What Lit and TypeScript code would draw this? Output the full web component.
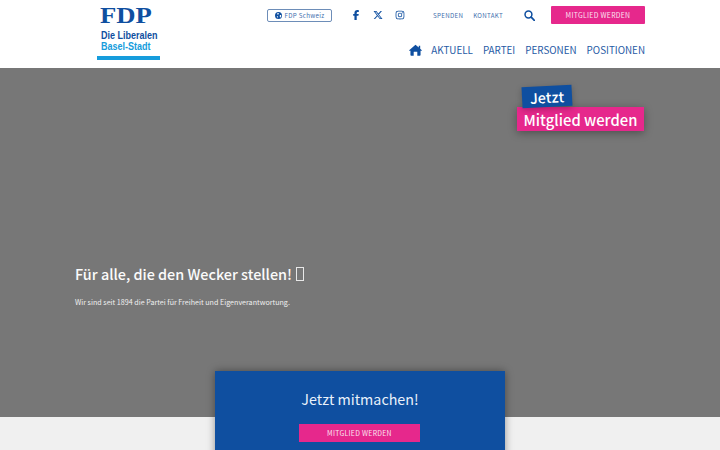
import { LitElement, html, css } from "lit";
import { customElement } from "lit/decorators.js";

@customElement("app-root")
export class AppRoot extends LitElement {
  static styles = css`
    :host { display: block; width: 720px; height: 450px; overflow: hidden; background: #f0f0f0; font-family: "Noto Sans CJK SC", "Noto Sans", sans-serif; color: #0f4fa0; }
    * { box-sizing: border-box; }
    a { text-decoration: none; color: inherit; }
    header { height: 68px; background: #fff; display: flex; justify-content: space-between; padding: 0 75px 0 97px; }
    .logo { width: 63px; height: 60px; display: flex; flex-direction: column; border-bottom: 4px solid #169cdc; }
    .logo .fdp { font-family: "Liberation Serif", serif; font-weight: 700; font-size: 23px; line-height: 18px; margin: 7px 0 0 3px; color: #0f4fa0; transform: scaleX(1.16); transform-origin: left center; }
    .logo .l { font-family: "Liberation Sans", sans-serif; font-weight: 700; font-size: 10.6px; line-height: 11px; margin-left: 4px; white-space: nowrap; transform: scaleX(0.85); transform-origin: left center; }
    .logo .l1 { margin-top: 5px; color: #0f4fa0; }
    .logo .l2 { color: #169cdc; }
    .right { display: flex; flex-direction: column; align-items: flex-end; }
    .top { height: 18px; margin-top: 6px; display: flex; align-items: center; }
    .swiss { width: 65px; height: 13px; border: 1px solid #6d8db8; border-radius: 2px; display: flex; align-items: center; justify-content: center; gap: 3px; font-size: 6.2px; letter-spacing: 0.3px; color: #3f6fae; }
    .swiss svg { width: 7px; height: 7px; fill: #0f4fa0; }
    .social { display: flex; align-items: center; gap: 12px; margin-left: 19px; }
    .social svg { display: block; height: 10px; width: 10px; fill: #0f4fa0; }
    .meta { display: flex; gap: 10px; margin-left: 28px; font-size: 6.2px; letter-spacing: 0.3px; color: #3f6fae; }
    .search { margin-left: 21px; width: 11px; height: 11px; display: block; }
    .btn { background: #e6288c; color: #fbe3f0; font-size: 6.85px; letter-spacing: 0.3px; display: flex; align-items: center; justify-content: center; }
    .btn.top-b { width: 94px; height: 18px; margin-left: 16px; border-radius: 1px; }
    nav { margin-top: 18px; display: flex; align-items: center; gap: 10px; font-size: 9.85px; line-height: 16px; color: #1f5aa5; }
    nav svg { width: 13px; height: 12px; fill: #0f4fa0; display: block; margin-right: -1px; }
    .hero { position: relative; height: 349px; background: #777; padding: 196px 0 0 75px; color: #fff; }
    h1 { margin: 0; font-size: 14.4px; line-height: 20px; font-weight: 500; color: #fbfbfb; display: flex; align-items: center; gap: 4px; }
    .tofu { width: 8px; height: 14px; border: 1px solid #e8e8e8; display: block; }
    .hero p { margin: 12px 0 0; font-size: 7.15px; line-height: 12px; color: #f0f0f0; }
    .badge { position: absolute; left: 517px; top: 18px; display: flex; flex-direction: column; align-items: flex-start; }
    .b1 { margin-left: 5px; width: 50px; height: 21px; background: #0f4fa0; color: #fff; font-size: 14.3px; font-weight: 500; display: flex; align-items: center; justify-content: center; transform: rotate(-3deg); box-shadow: 0 2px 6px rgba(0,0,0,.25); }
    .b2 { width: 127px; height: 24px; background: #e6288c; color: #fff; font-size: 14.8px; font-weight: 500; display: flex; align-items: center; justify-content: center; box-shadow: 0 2px 8px rgba(0,0,0,.35); }
    .card { position: relative; width: 290px; height: 140px; margin: -46px 0 0 215px; background: #0f4fa0; box-shadow: 0 0 8px rgba(0,0,0,.4); display: flex; flex-direction: column; align-items: center; padding-top: 16px; }
    .card h2 { margin: 0; font-size: 14.3px; line-height: 24px; font-weight: 400; color: #e9f1fb; }
    .card .btn { width: 121px; height: 18px; margin: 13px 1px 0 0; }
  `;

  render() {
    return html`
      <header>
        <a class="logo" href="#">
          <span class="fdp">FDP</span>
          <span class="l l1">Die Liberalen</span>
          <span class="l l2">Basel-Stadt</span>
        </a>
        <div class="right">
          <div class="top">
            <a class="swiss" href="#">
              <svg viewBox="0 0 16 16"><path fill-rule="evenodd" d="M8 0a8 8 0 1 0 0 16A8 8 0 0 0 8 0ZM5 3l3-1 1 2-2 2-2-1ZM11 7l3 0 0 3-2 3-1-2ZM4 9l3 1 0 3-2-1Z"/></svg>
              FDP Schweiz
            </a>
            <div class="social">
              <svg viewBox="0 0 320 512"><path d="M80 299v213h116V299h87l18-97H196v-34c0-51 20-71 72-71 16 0 29 0 37 1V10c-14-4-49-8-69-8C130 2 80 52 80 159v43H15v97Z"/></svg>
              <svg viewBox="0 0 512 512"><path d="M389 48h71L306 224l181 240H345L234 319 107 464H36l165-188L27 48h146l100 133Zm-25 374h39L151 88h-42Z"/></svg>
              <svg viewBox="0 0 448 512"><path d="M224 141a115 115 0 1 0 0 230 115 115 0 0 0 0-230Zm0 190a75 75 0 1 1 0-150 75 75 0 0 1 0 150Zm146-194a27 27 0 1 1-54 0 27 27 0 0 1 54 0Zm76 27c-2-36-10-68-36-94s-58-34-94-36c-37-2-148-2-185 0-36 2-68 10-94 36S3 128 1 164c-2 37-2 148 0 185 2 36 10 68 36 94s58 34 94 36c37 2 148 2 185 0 36-2 68-10 94-36s34-58 36-94c2-37 2-148 0-185Zm-48 225c-8 20-23 35-43 43-30 12-100 9-131 9s-102 3-131-9c-20-8-35-23-43-43-12-30-9-100-9-131s-3-102 9-131c8-20 23-35 43-43 30-12 100-9 131-9s102-3 131 9c20 8 35 23 43 43 12 30 9 100 9 131s3 102-9 131Z"/></svg>
            </div>
            <div class="meta"><a href="#">SPENDEN</a><a href="#">KONTAKT</a></div>
            <svg class="search" viewBox="0 0 16 16"><circle cx="6.500" cy="6.500" r="5" fill="none" stroke="#0f4fa0" stroke-width="2.200"/><path d="m10.500 10.500 4.500 4.500" stroke="#0f4fa0" stroke-width="2.600" stroke-linecap="round"/></svg>
            <a class="btn top-b" href="#">MITGLIED WERDEN</a>
          </div>
          <nav>
            <svg viewBox="0 0 576 512"><path d="M288 20 8 262c-10 9-6 26 8 26h48v192c0 18 14 32 32 32h112V352c0-9 7-16 16-16h128c9 0 16 7 16 16v160h112c18 0 32-14 32-32V288h48c14 0 18-17 8-26l-72-62V64h-64v80Z"/></svg>
            <a href="#">AKTUELL</a><a href="#">PARTEI</a><a href="#">PERSONEN</a><a href="#">POSITIONEN</a>
          </nav>
        </div>
      </header>
      <section class="hero">
        <h1>Für alle, die den Wecker stellen! <span class="tofu"></span></h1>
        <p>Wir sind seit 1894 die Partei für Freiheit und Eigenverantwortung.</p>
        <div class="badge">
          <div class="b1">Jetzt</div>
          <div class="b2">Mitglied werden</div>
        </div>
      </section>
      <section class="card">
        <h2>Jetzt mitmachen!</h2>
        <a class="btn" href="#">MITGLIED WERDEN</a>
      </section>
    `;
  }
}
